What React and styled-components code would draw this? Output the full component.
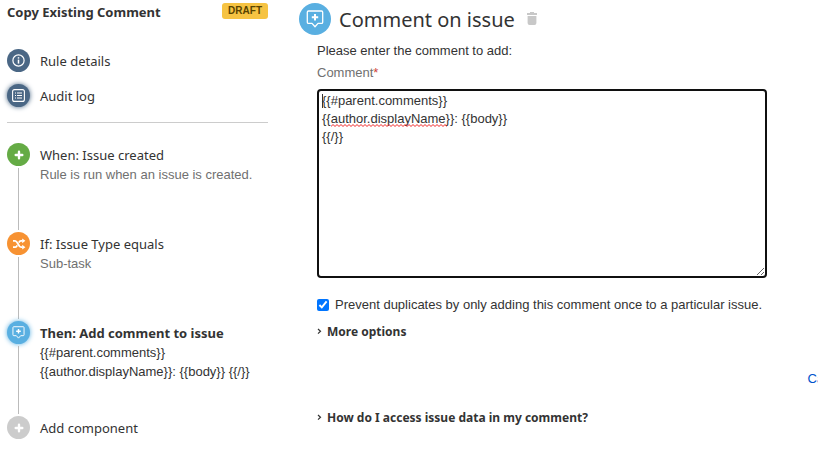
import React, { useState } from "react"
import styled, { createGlobalStyle } from "styled-components"

const InfoIcon = () => (
    <svg width="13" height="13" viewBox="0 0 13 13" fill="none" stroke="#fff" aria-hidden="true">
        <circle cx="6.5" cy="6.5" r="5.6" strokeWidth="1.2" />
        <path d="M6.5 5.6v4" strokeWidth="1.5" />
        <path d="M6.5 3.2v1.4" strokeWidth="1.5" />
    </svg>
)

const LogIcon = () => (
    <svg width="13" height="13" viewBox="0 0 13 13" fill="none" stroke="#fff" aria-hidden="true">
        <rect x="0.6" y="0.6" width="11.8" height="11.8" rx="2" strokeWidth="1.1" />
        <path d="M3 4h1M5 4h5M3 6.5h1M5 6.5h5M3 9h1M5 9h5" />
    </svg>
)

const PlusIcon = () => (
    <svg width="10" height="10" viewBox="0 0 10 10" fill="none" stroke="#fff" strokeWidth="2.4" strokeLinecap="round" aria-hidden="true">
        <path d="M5 1.7v6.6M1.7 5h6.6" />
    </svg>
)

const ShuffleIcon = () => (
    <svg width="14" height="12" viewBox="0 0 14 12" fill="none" stroke="#fff" strokeWidth="1.8" aria-hidden="true">
        <path d="M1 2.8h2.2c2.6 0 3.2 6.4 5.8 6.4h1.6" />
        <path d="M1 9.2h2.2c1 0 1.6-.8 2-1.8M6.9 4.6c.4-1 1.1-1.8 2.1-1.8h1.6" />
        <path d="M10.2.4 13.4 2.8l-3.2 2.4zM10.2 6.8l3.2 2.4-3.2 2.4z" fill="#fff" stroke="none" />
    </svg>
)

const CommentIcon = ({ size }) => (
    <svg width={size} height={size} viewBox="0 0 18 18" fill="none" stroke="#fff" aria-hidden="true">
        <path d="M2.5 1h13a1.2 1.2 0 0 1 1.2 1.2v10a1.2 1.2 0 0 1-1.2 1.2H12l-3 3.4-3-3.4H2.500a1.200 1.200 0 0 1-1.200-1.200v-10A1.200 1.200 0 0 1 2.500 1z" strokeWidth="1.300" strokeLinejoin="round" />
        <path d="M9 4v6.400M5.800 7.200h6.400" strokeWidth="2" />
    </svg>
)

const TrashIcon = () => (
    <svg width="10" height="13" viewBox="0 0 10 13" fill="#c8c8c8" aria-hidden="true">
        <path d="M3 0h4v1h3v2H0V1h3zM.6 4h8.800v7a2 2 0 0 1-2 2H2.600a2 2 0 0 1-2-2z" />
    </svg>
)

const ChevronIcon = () => (
    <svg width="5" height="9" viewBox="0 0 5 9" fill="none" stroke="#333" strokeWidth="1.2" aria-hidden="true">
        <path d="M1 1l2.500 2.300L1 5.600" />
    </svg>
)

const steps = [
    { title: "When: Issue created", text: "Rule is run when an issue is created.", color: "#65ab45", icon: <PlusIcon /> },
    { title: "If: Issue Type equals", text: "Sub-task", color: "#f79232", icon: <ShuffleIcon /> },
    { title: "Then: Add comment to issue", text: "{{#parent.comments}}\n{{author.displayName}}: {{body}} {{/}}", color: "#59afe1", icon: <CommentIcon size={13} />, active: true },
    { title: "Add component", color: "#cccccc", icon: <PlusIcon /> },
]

const App = () => {
    const [comment, setComment] = useState("{{#parent.comments}}\n{{author.displayName}}: {{body}}\n{{/}}")
    const [once, setOnce] = useState(true)

    return (
        <Page>
            <GlobalStyle />
            <Sidebar>
                <RuleHeader>
                    <RuleName>Copy Existing Comment</RuleName>
                    <Badge>DRAFT</Badge>
                </RuleHeader>
                <RuleNav>
                    <NavButton type="button">
                        <Dot $color="#4a6785"><InfoIcon /></Dot>
                        Rule details
                    </NavButton>
                    <NavButton type="button">
                        <Dot $color="#4a6785" $active><LogIcon /></Dot>
                        Audit log
                    </NavButton>
                </RuleNav>
                <Steps>
                    {steps.map((step, i) => (
                        <Step key={step.title}>
                            <Rail>
                                <Dot $color={step.color} $active={step.active}>{step.icon}</Dot>
                                {i < steps.length - 1 && <Line />}
                            </Rail>
                            <StepButton type="button">
                                <StepTitle $active={step.active}>{step.title}</StepTitle>
                                {step.text && <StepText $active={step.active}>{step.text}</StepText>}
                            </StepButton>
                        </Step>
                    ))}
                </Steps>
            </Sidebar>
            <Main>
                <MainHeader>
                    <Dot $color="#59afe1" $large><CommentIcon size={18} /></Dot>
                    <Title>Comment on issue</Title>
                    <IconButton type="button" aria-label="Delete"><TrashIcon /></IconButton>
                </MainHeader>
                <Form>
                    <Intro>Please enter the comment to add:</Intro>
                    <Label htmlFor="comment">Comment<Required>*</Required></Label>
                    <Editor>
                        <TextArea id="comment" spellCheck={false} value={comment} onChange={e => setComment(e.target.value)} />
                        <Caret />
                        <Squiggle aria-hidden="true">
                            <defs>
                                <pattern id="wave" width="4" height="3" patternUnits="userSpaceOnUse">
                                    <path d="M-1 1.500L0 2.500L2 .5L4 2.500L5 1.500" fill="none" stroke="#f02020" strokeWidth="1" />
                                </pattern>
                            </defs>
                            <rect width="100%" height="3" fill="url(#wave)" />
                        </Squiggle>
                    </Editor>
                    <CheckLabel>
                        <Checkbox type="checkbox" checked={once} onChange={e => setOnce(e.target.checked)} />
                        Prevent duplicates by only adding this comment once to a particular issue.
                    </CheckLabel>
                    <Expander type="button"><ChevronIcon />More options</Expander>
                    <Actions>
                        <Cancel href="#cancel">Cancel</Cancel>
                    </Actions>
                    <Expander type="button"><ChevronIcon />How do I access issue data in my comment?</Expander>
                </Form>
            </Main>
        </Page>
    )
}

export default App

const GlobalStyle = createGlobalStyle`
    * {
        box-sizing: border-box;
    }

    body {
        margin: 0;
        background: #fff;
        color: #333;
        font-family: "Liberation Sans", Arial, sans-serif;
        font-size: 13px;
        line-height: 18px;
    }

    button {
        padding: 0;
        border: 0;
        background: none;
        color: inherit;
        font: inherit;
        text-align: left;
        cursor: pointer;
    }
`

const Page = styled.div`
    display: grid;
    grid-template-columns: 268px minmax(0, 1fr);
    column-gap: 31px;
    overflow: hidden;
`

const Sidebar = styled.aside`
    padding-left: 7px;
`

const RuleHeader = styled.div`
    display: flex;
    justify-content: space-between;
    align-items: flex-start;
    padding-top: 3px;
`

const RuleName = styled.h2`
    margin: 0;
    font-family: "Noto Sans", sans-serif;
    font-size: 13px;
    line-height: 18px;
`

const Badge = styled.span`
    padding: 0 6px;
    border-radius: 3px;
    background: #f6c342;
    color: #594300;
    font-size: 10px;
    font-weight: bold;
    line-height: 16px;
`

const RuleNav = styled.nav`
    display: flex;
    flex-direction: column;
    gap: 12px;
    padding: 28px 0 15px;
    border-bottom: 1px solid #ccc;
`

const NavButton = styled.button`
    display: flex;
    align-items: center;
    gap: 10px;
    font-family: "Noto Sans", sans-serif;
    line-height: 20px;
`

const Dot = styled.span`
    display: flex;
    flex: none;
    justify-content: center;
    align-items: center;
    width: ${props => props.$large ? "32px" : "23px"};
    height: ${props => props.$large ? "32px" : "23px"};
    border-radius: 50%;
    background: ${props => props.$color};
    box-shadow: ${props => props.$active ? `0 0 5px ${props.$color}` : "none"};
`

const Steps = styled.ol`
    margin: 0;
    padding: 20px 0 0;
    list-style: none;
`

const Step = styled.li`
    display: flex;
    gap: 10px;
    min-height: 89px;

    &:last-child {
        min-height: 0;
    }
`

const Rail = styled.div`
    display: flex;
    flex-direction: column;
    align-items: center;
`

const Line = styled.span`
    flex: 1;
    width: 1px;
    margin: 2px 0;
    background: #bbb;
`

const StepButton = styled.button`
    display: flex;
    flex-direction: column;
    padding: 2px 0 0;

    ${Step}:not(:last-child) & {
        padding-bottom: 35px;
    }
`

const StepTitle = styled.span`
    font-family: "Noto Sans", sans-serif;
    font-weight: ${props => props.$active ? "bold" : "normal"};
    line-height: 20px;
`

const StepText = styled.span`
    color: ${props => props.$active ? "#333" : "#707070"};
    line-height: 19px;
    white-space: pre-line;
`

const Main = styled.main`
    min-width: 0;
`

const MainHeader = styled.header`
    display: flex;
    align-items: center;
    gap: 8px;
    padding-top: 2px;
`

const Title = styled.h1`
    margin: 0;
    padding-top: 2px;
    font-family: "Noto Sans", sans-serif;
    font-size: 20px;
    font-weight: normal;
    line-height: 31px;
`

const IconButton = styled.button`
    display: flex;
    padding: 0 4px;
`

const Form = styled.form`
    display: flex;
    flex-direction: column;
    align-items: flex-start;
    padding: 7px 0 0 18px;
`

const Intro = styled.p`
    margin: 0 0 4px;
`

const Label = styled.label`
    color: #707070;
`

const Required = styled.span`
    color: #d04437;
`

const Editor = styled.div`
    position: relative;
    width: 100%;
    margin-top: 7px;
    padding-right: 51px;
`

const TextArea = styled.textarea`
    display: block;
    width: 100%;
    height: 189px;
    padding: 1px 3px;
    border: 2px solid #101010;
    border-radius: 4px;
    outline: none;
    color: inherit;
    font: inherit;
`

const Caret = styled.span`
    position: absolute;
    top: 5px;
    left: 5px;
    width: 1px;
    height: 14px;
    background: #333;
`

const Squiggle = styled.svg`
    position: absolute;
    top: 35px;
    left: 14px;
    width: 116px;
    height: 3px;
`

const CheckLabel = styled.label`
    display: flex;
    align-items: center;
    gap: 6px;
    margin-top: 18px;
`

const Checkbox = styled.input`
    width: 12px;
    height: 12px;
    margin: 0;
    accent-color: #0075ff;
`

const Expander = styled.button`
    display: flex;
    align-items: center;
    gap: 5px;
    margin-top: 9px;
    font-family: "Noto Sans", sans-serif;
    font-size: 12px;
    font-weight: bold;
`

const Actions = styled.div`
    display: flex;
    align-self: stretch;
    justify-content: flex-end;
    margin: 29px -30px 12px 0;
`

const Cancel = styled.a`
    color: #0052cc;
    text-decoration: none;
`
